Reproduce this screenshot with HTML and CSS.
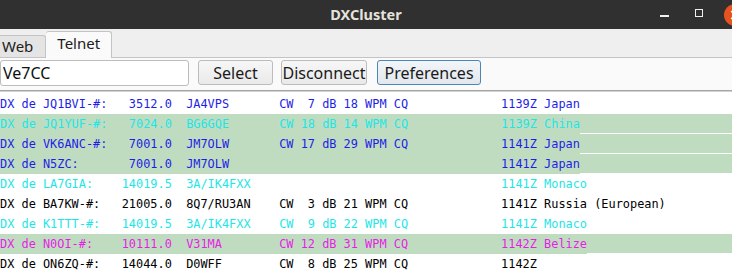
FILE: index.html
```html
<!DOCTYPE html>
<html>
	<head>
		<meta charset="utf-8" />
		<title>DXCluster</title>
		<link rel="stylesheet" href="styles.css">
	</head>
	<body>
		<div class="window">
			<div class="titlebar">
				<div></div>
				<div class="title">DXCluster</div>
				<div class="controls">
					<span class="ctl-min"></span>
					<span class="ctl-max"></span>
					<span class="ctl-close">
						<svg width="22" height="22" viewBox="0 0 22 22"><path d="M7.5 7.5l7 7M14.5 7.5l-7 7" stroke="#fff" stroke-width="1.4" stroke-linecap="round"/></svg>
					</span>
				</div>
			</div>
			<div class="tabs">
				<div class="tab">Web</div>
				<div class="tab active">Telnet</div>
			</div>
			<div class="pane">
				<div class="toolbar">
					<input class="host" type="text" value="Ve7CC">
					<button class="btn">Select</button>
					<button class="btn wide">Disconnect</button>
					<button class="btn focus">Preferences</button>
				</div>
				<div class="spots">
<div class="spot blue"><span>DX de JQ1BVI-#:   3512.0  JA4VPS       CW  7 dB 18 WPM CQ             1139Z Japan</span></div>
<div class="spot cyan mark"><span>DX de JQ1YUF-#:   7024.0  BG6GQE       CW 18 dB 14 WPM CQ             1139Z China</span></div>
<div class="spot blue mark"><span>DX de VK6ANC-#:   7001.0  JM7OLW       CW 17 dB 29 WPM CQ             1141Z Japan</span></div>
<div class="spot blue mark"><span>DX de N5ZC:       7001.0  JM7OLW                                      1141Z Japan</span></div>
<div class="spot cyan"><span>DX de LA7GIA:    14019.5  3A/IK4FXX                                   1141Z Monaco</span></div>
<div class="spot black"><span>DX de BA7KW-#:   21005.0  8Q7/RU3AN    CW  3 dB 21 WPM CQ             1141Z Russia (European)</span></div>
<div class="spot cyan"><span>DX de K1TTT-#:   14019.5  3A/IK4FXX    CW  9 dB 22 WPM CQ             1141Z Monaco</span></div>
<div class="spot magenta mark"><span>DX de N0OI-#:    10111.0  V31MA        CW 12 dB 31 WPM CQ             1142Z Belize</span></div>
<div class="spot black"><span>DX de ON6ZQ-#:   14044.0  D0WFF        CW  8 dB 25 WPM CQ             1142Z</span></div>
				</div>
			</div>
		</div>
	</body>
</html>
```

FILE: styles.css
```css
body{
	margin:0;
	background-color:#fafafa;
}
.window{
	width:732px;
	height:278px;
	overflow:hidden;
	font-family:"Noto Sans", sans-serif;
}
.titlebar{
	height:29px;
	background-color:#303030;
	display:grid;
	grid-template-columns:1fr auto 1fr;
	align-items:center;
	overflow:hidden;
}
.titlebar .title{
	color:#e6e3dd;
	font-weight:bold;
	font-size:14.5px;
	padding-bottom:2px;
}
.controls{
	display:flex;
	justify-content:flex-end;
	align-items:center;
}
.ctl-min{
	width:9px;
	height:2px;
	background-color:#f0f0f0;
	margin-top:2px;
	margin-right:26px;
}
.ctl-max{
	width:6px;
	height:6px;
	border:1.5px solid #f0f0f0;
	margin-bottom:4px;
	margin-right:21px;
}
.ctl-close{
	width:22px;
	height:22px;
	border-radius:50%;
	background-color:#e6531f;
	margin-right:-14px;
	flex-shrink:0;
}
.ctl-close svg{
	display:block;
}
.tabs{
	height:28px;
	background-color:#efefef;
	display:flex;
	align-items:flex-end;
	border-bottom:1px solid #c4c4c4;
	font-size:15px;
}
.tab{
	height:20px;
	padding:0 12px 1px 2px;
	background-color:#e4e4e4;
	border:1px solid #c4c4c4;
	border-left:none;
	border-bottom:none;
	border-radius:0 3px 0 0;
	line-height:20px;
	color:#202020;
}
.tab.active{
	height:26px;
	padding:0 11px;
	background-color:#fafafa;
	border-radius:3px 3px 0 0;
	line-height:22px;
	position:relative;
	top:1px;
}
.pane{
	background-color:#fafafa;
}
.toolbar{
	box-sizing:border-box;
	display:flex;
	align-items:flex-start;
	height:32px;
	padding-top:2px;
}
.host{
	box-sizing:border-box;
	width:189px;
	height:26px;
	margin:0 9px 0 0;
	padding:0 2px;
	border:1px solid #bdbdbd;
	border-radius:3px;
	background-color:#fff;
	font-family:"Noto Sans", sans-serif;
	font-size:16px;
	color:#101010;
	outline:none;
}
.btn{
	box-sizing:border-box;
	height:25px;
	width:75px;
	margin:0 8px 0 0;
	padding:0;
	border:1px solid #bcbcbc;
	border-radius:3px;
	background:linear-gradient(#f7f7f7,#e9e9e9);
	font-family:"Noto Sans", sans-serif;
	font-size:16px;
	color:#1a1a1a;
	line-height:22px;
}
.btn.wide{
	width:86px;
	margin-right:10px;
}
.btn.focus{
	width:104px;
	border-color:#4d86b4;
	background:linear-gradient(#f2f5f8,#e2e8ee);
}
.spots{
	border-top:1px solid #a6a6a6;
	box-shadow:inset 0 1px 0 #d2d2d2;
	background-color:#fff;
	padding-top:3px;
	height:190px;
	font-family:"DejaVu Sans Mono", monospace;
	font-size:11.9px;
}
.spot{
	height:20px;
	line-height:20px;
	white-space:pre;
}
.spot.mark{
	background:linear-gradient(#c0dcc0 19px, transparent 19px);
}
.spot.mark span{
	display:inline-block;
	height:20px;
	background-color:#c0dcc0;
}
.blue{
	color:#1e1ee6;
}
.cyan{
	color:#1ee6e6;
}
.magenta{
	color:#e61ee6;
}
.black{
	color:#000;
}
```
